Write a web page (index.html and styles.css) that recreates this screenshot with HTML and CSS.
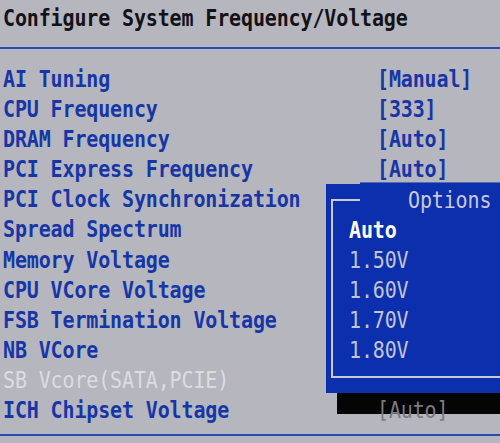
FILE: index.html
```html
<!DOCTYPE html>
<html>
<head>
<meta charset="utf-8">
<link rel="stylesheet" href="styles.css">
</head>
<body>
<div class="screen">
  <header class="head"><span class="t">Configure System Frequency/Voltage</span></header>
  <div class="rule"></div>
  <div class="list">
    <div class="row"><span class="t">AI Tuning</span><span class="t">[Manual]</span></div>
    <div class="row"><span class="t">CPU Frequency</span><span class="t">[333]</span></div>
    <div class="row"><span class="t">DRAM Frequency</span><span class="t">[Auto]</span></div>
    <div class="row"><span class="t">PCI Express Frequency</span><span class="t">[Auto]</span></div>
    <div class="row"><span class="t">PCI Clock Synchronization</span><span></span></div>
    <div class="row"><span class="t">Spread Spectrum</span><span></span></div>
    <div class="row"><span class="t">Memory Voltage</span><span></span></div>
    <div class="row"><span class="t">CPU VCore Voltage</span><span></span></div>
    <div class="row"><span class="t">FSB Termination Voltage</span><span></span></div>
    <div class="row"><span class="t">NB VCore</span><span></span></div>
    <div class="row disabled"><span class="t">SB Vcore(SATA,PCIE)</span><span></span></div>
    <div class="row"><span class="t">ICH Chipset Voltage</span><span class="t shadowed">[Auto]</span></div>
  </div>
  <div class="rule bottom"></div>

  <div class="popup-shadow"></div>
  <div class="popup">
    <div class="frame">
      <span class="ptitle t">Options</span>
      <div class="opt sel"><span class="t">Auto</span></div>
      <div class="opt"><span class="t">1.50V</span></div>
      <div class="opt"><span class="t">1.60V</span></div>
      <div class="opt"><span class="t">1.70V</span></div>
      <div class="opt"><span class="t">1.80V</span></div>
    </div>
  </div>
</div>
</body>
</html>
```
FILE: styles.css
```css
html, body {
  margin: 0;
  padding: 0;
}
body {
  width: 500px;
  height: 443px;
  overflow: hidden;
  background: #b6b6be;
  font-family: "DejaVu Sans Mono", "Liberation Mono", monospace;
  font-size: 20px;
  letter-spacing: -0.14px;
}
.screen {
  position: relative;
  width: 500px;
  height: 443px;
  overflow: hidden;
}
.t {
  display: inline-block;
  transform: scaleY(1.17);
  white-space: pre;
}
.head {
  height: 47px;
  padding-left: 3px;
  box-sizing: border-box;
  padding-top: 6px;
  color: #121218;
  font-weight: bold;
}
.rule {
  height: 2px;
  background: #2a48b8;
}
.list {
  padding-top: 15px;
}
.row {
  display: grid;
  grid-template-columns: 374px 1fr;
  padding-left: 3px;
  height: 30.1px;
  line-height: 30.1px;
  color: #1636a6;
  font-weight: bold;
}
.row.disabled {
  color: #dcdce2;
  font-weight: normal;
}
.shadowed {
  position: relative;
  z-index: 3;
  color: #7c7c80;
  font-weight: normal;
}
.rule.bottom {
  margin-top: 9px;
}
.popup-shadow {
  position: absolute;
  z-index: 1;
  left: 337px;
  top: 205px;
  right: 0;
  height: 209px;
  background: #050505;
}
.popup {
  position: absolute;
  z-index: 2;
  left: 326px;
  top: 184px;
  right: -100px;
  height: 209px;
  box-sizing: border-box;
  padding: 15px 0 15px 5px;
  background: #0c2fae;
}
.frame {
  position: relative;
  height: 179px;
  box-sizing: border-box;
  border: 2px solid #c9cad6;
  border-right: none;
  padding-top: 14px;
}
.ptitle {
  position: absolute;
  left: 27px;
  top: -16px;
  padding: 0 80px 0 48px;
  line-height: 30px;
  background: #0c2fae;
  color: #c9cad6;
  font-weight: normal;
}
.opt {
  height: 30.1px;
  line-height: 30.1px;
  padding-left: 16px;
  color: #c2c4d0;
}
.opt.sel {
  color: #ffffff;
  font-weight: bold;
}
```
